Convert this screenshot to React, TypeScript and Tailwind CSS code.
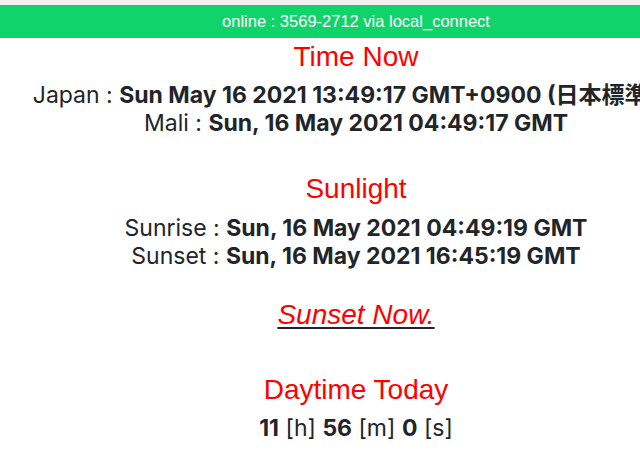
import React from 'react';

const heading = "text-[28px] leading-[32px] text-[#ff0000] font-['Liberation_Sans',Arial,sans-serif]";

const App: React.FC = () => {
    return (
        <div className="w-full min-h-[453px] overflow-hidden bg-white">
            <div className="h-[5px] bg-[#efefef]" />
            <div className="w-[712px] text-center text-[#212529] font-['Inter','Noto_Sans_CJK_JP',sans-serif]">
                <div className="h-[33px] bg-[#10d469] flex items-center justify-center text-white text-[16.5px] font-['Liberation_Sans',Arial,sans-serif]">
                    online : 3569-2712 via local_connect
                </div>

                <h2 className={`${heading} mt-[3px]`}>Time Now</h2>
                <div className="mt-[8px] text-[23px] leading-[28px] whitespace-nowrap">
                    <p>
                        Japan : <span className="font-bold">Sun May 16 2021 13:49:17 GMT+0900 (日本標準時)</span>
                    </p>
                    <p>
                        Mali : <span className="font-bold">Sun, 16 May 2021 04:49:17 GMT</span>
                    </p>
                </div>

                <h2 className={`${heading} mt-[36px]`}>Sunlight</h2>
                <div className="mt-[9px] text-[23px] leading-[28px] whitespace-nowrap">
                    <p>
                        Sunrise : <span className="font-bold">Sun, 16 May 2021 04:49:19 GMT</span>
                    </p>
                    <p>
                        Sunset : <span className="font-bold">Sun, 16 May 2021 16:45:19 GMT</span>
                    </p>
                </div>

                <p className="mt-[28px] text-[28px] leading-[32px]">
                    <a href="#" className="underline decoration-[#212529] decoration-2 underline-offset-[3px]">
                        <span className={`${heading} italic`}>Sunset Now.</span>
                    </a>
                </p>

                <h2 className={`${heading} mt-[43px]`}>Daytime Today</h2>
                <p className="mt-[8px] text-[23px] leading-[28px]">
                    <span className="font-bold">11</span> [h] <span className="font-bold">56</span> [m]{' '}
                    <span className="font-bold">0</span> [s]
                </p>
            </div>
        </div>
    );
};

export default App;
